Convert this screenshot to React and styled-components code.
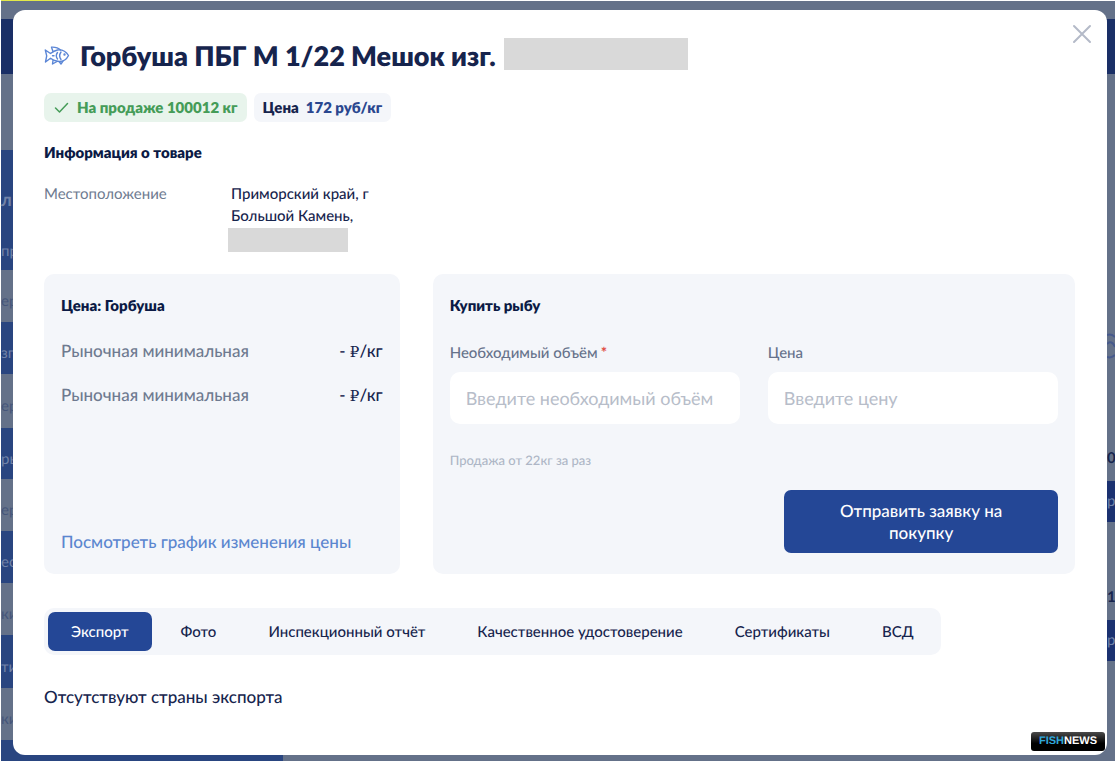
import React, { useState } from 'react';
import styled, { createGlobalStyle } from 'styled-components';

//* * Data * *//

const catalogRows = [
  { text: 'л', tone: 'blue', height: 120, big: true },
  { text: 'ера', tone: 'grey', height: 52 },
  { text: 'зго', tone: 'blue', height: 52 },
  { text: 'ера', tone: 'grey', height: 54 },
  { text: 'рыб', tone: 'blue', height: 51 },
  { text: 'ера', tone: 'grey', height: 52 },
  { text: 'ес', tone: 'blue', height: 52 },
  { text: 'ки', tone: 'grey', height: 52 },
  { text: 'тик', tone: 'blue', height: 53 },
  { text: 'ки', tone: 'grey', height: 52 },
];

const prices = ['Рыночная минимальная', 'Рыночная минимальная'];

const fields = [
  { id: 'volume', label: 'Необходимый объём', hint: 'Введите необходимый объём', required: true },
  { id: 'price', label: 'Цена', hint: 'Введите цену', required: false },
];

const tabs = ['Экспорт', 'Фото', 'Инспекционный отчёт', 'Качественное удостоверение', 'Сертификаты', 'ВСД'];

//* * Page behind the dialog * *//

const GlobalStyle = createGlobalStyle`
  * {
    box-sizing: border-box;
  }

  body {
    margin: 0;
    color: #16244d;
    font-family: Lato, 'Liberation Sans', sans-serif;
    font-size: 15px;
    text-rendering: geometricPrecision;
  }

  button, input {
    font-family: inherit;
    text-rendering: inherit;
  }
`;

const Page = styled.div`
  display: grid;
  min-height: 100vh;
  overflow: hidden;
  background: #fff;
`;

const Backdrop = styled.div`
  grid-area: 1 / 1;
  display: flex;
  flex-direction: column;
  margin-left: 1px;
  background: #647189;
`;

const TopLine = styled.div`
  height: 1px;
  background: linear-gradient(to right, #e3e84a 69px, #fff 69px);
`;

const HeaderBar = styled.div`
  height: 55px;
  margin-top: 18px;
  background: #1a2f66;
`;

const Columns = styled.div`
  display: flex;
  flex: 1;
  justify-content: space-between;
`;

const Catalog = styled.div`
  display: flex;
  flex-direction: column;
  width: 282px;
  padding-top: 76px;
`;

const CatalogRow = styled.div`
  display: flex;
  flex-direction: column;
  justify-content: ${(props) => (props.$big ? 'flex-end' : 'center')};
  gap: 32px;
  height: ${(props) => props.$height}px;
  padding: ${(props) => (props.$big ? '0 0 10px' : '10px 0 0')};
  background: ${(props) => (props.$tone === 'blue' ? '#294580' : '#647189')};
  color: ${(props) => (props.$tone === 'blue' ? '#7283a8' : '#46567a')};
`;

const CatalogTitle = styled.strong`
  font-size: 18px;
`;

const CatalogEnd = styled.div`
  flex: 1;
  background: #294580;
`;

const Offers = styled.div`
  display: flex;
  flex-direction: column;
  width: 8px;
  padding-top: 258px;
`;

const OfferList = styled.div`
  padding-top: 23px;
`;

const Offer = styled.div`
  display: flex;
  flex-direction: column;
  justify-content: flex-end;
  height: 139px;
  overflow: hidden;
  color: #16244d;
  font-weight: 700;
  line-height: 20px;
`;

const OfferTag = styled.span`
  height: 41px;
  margin-top: 13px;
  background: #1b3170;
  color: #7283a8;
  font-weight: 400;
  line-height: 41px;
`;

const RoundIcon = styled.svg`
  flex: none;
  width: 28px;
  height: 28px;
`;

//* * Dialog * *//

const Dialog = styled.main`
  grid-area: 1 / 1;
  position: relative;
  margin: 10px 8px 6px 13px;
  padding: 28px 32px 32px 31px;
  border-radius: 12px;
  background: #fff;
`;

const CloseButton = styled.button`
  position: absolute;
  top: 12px;
  right: 13px;
  width: 24px;
  height: 24px;
  padding: 0;
  border: 0;
  background: none;
  color: #b4bac8;
  cursor: pointer;
`;

const TitleRow = styled.header`
  display: flex;
  align-items: center;
  height: 36px;
`;

const FishIcon = styled.svg`
  width: 26px;
  height: 22px;
  margin-right: 10px;
`;

const Title = styled.h1`
  margin: 0;
  font-size: 27px;
  font-weight: 800;
  line-height: 36px;
`;

const Redacted = styled.span`
  width: ${(props) => props.$width}px;
  height: ${(props) => props.$height}px;
  background: #d9d9d9;
`;

const TitleRedacted = styled(Redacted)`
  margin: 0 0 4px 8px;
`;

const Tags = styled.div`
  display: flex;
  gap: 7px;
  margin-top: 19px;
`;

const Tag = styled.span`
  display: flex;
  align-items: center;
  gap: 7px;
  padding: 4px 9px 3px;
  border-radius: 7px;
  background: ${(props) => (props.$green ? '#e8f4ec' : '#f4f6fa')};
  color: ${(props) => (props.$green ? '#459c58' : '#16244d')};
  font-weight: 800;
  line-height: 22px;
`;

const TagValue = styled.span`
  color: #2a478f;
`;

const SectionTitle = styled.h2`
  margin: 0;
  color: #0b1a45;
  font-size: 15px;
  font-weight: 800;
  line-height: 22px;
`;

const InfoTitle = styled(SectionTitle)`
  margin-top: 20px;
`;

const Info = styled.dl`
  display: flex;
  margin: 19px 0 22px;
  line-height: 22px;
`;

const InfoLabel = styled.dt`
  width: 187px;
  color: #6e7a90;
`;

const InfoValue = styled.dd`
  display: flex;
  flex-direction: column;
  width: 150px;
  margin: 0;
  font-weight: 500;
`;

const InfoRedacted = styled(Redacted)`
  margin: 1px 0 0 -3px;
`;

const Cards = styled.div`
  display: grid;
  grid-template-columns: 356fr 643fr;
  gap: 33px;
`;

const Card = styled.section`
  display: flex;
  flex-direction: column;
  min-height: 300px;
  padding: 21px 17px;
  border-radius: 10px;
  background: #f4f6fa;
`;

const PriceRow = styled.div`
  display: flex;
  justify-content: space-between;
  height: 22px;
  margin-top: 22px;
  font-size: 17px;
  font-weight: 500;
  line-height: 22px;
`;

const PriceList = styled.div`
  padding-top: 1px;
`;

const PriceLabel = styled.span`
  color: #6e7a90;
`;

const Ruble = styled.span`
  font-family: 'DejaVu Serif', serif;
  font-size: 15px;
`;

const ChartLink = styled.a`
  margin-top: auto;
  color: #5b86cf;
  font-size: 17px;
  font-weight: 500;
  line-height: 22px;
  text-decoration: none;
`;

const Fields = styled.div`
  display: grid;
  grid-template-columns: 1fr 1fr;
  gap: 28px;
  margin-top: 25px;
`;

const Field = styled.div`
  display: flex;
  flex-direction: column;
  gap: 8px;
`;

const Label = styled.label`
  color: #66728b;
  font-weight: 500;
  line-height: 22px;
`;

const Star = styled.span`
  margin-left: 3px;
  color: #e0483e;
  font-weight: 700;
`;

const Input = styled.input`
  width: 100%;
  height: 52px;
  padding: 0 16px;
  border: 0;
  border-radius: 10px;
  background: #fff;
  color: #16244d;
  font-size: 18px;

  &::placeholder {
    color: #b7bdc9;
    opacity: 1;
  }
`;

const Note = styled.p`
  margin: 25px 0 0;
  color: #aeb6c6;
  font-size: 13px;
  font-weight: 500;
  line-height: 22px;
`;

const SubmitButton = styled.button`
  align-self: flex-end;
  width: 45%;
  min-height: 63px;
  margin-top: auto;
  padding: 8px 32px;
  border: 0;
  border-radius: 7px;
  background: #244796;
  color: #fff;
  font-size: 17px;
  font-weight: 500;
  line-height: 22px;
  cursor: pointer;
`;

const Tabs = styled.nav`
  display: flex;
  width: fit-content;
  margin-top: 34px;
  padding: 4px;
  border-radius: 10px;
  background: #f4f6fa;
`;

const Tab = styled.button`
  height: 39px;
  margin-right: 6px;
  padding: 0 23px;
  border: 0;
  border-radius: 7px;
  background: ${(props) => (props.$active ? '#244796' : 'transparent')};
  color: ${(props) => (props.$active ? '#fff' : '#16244d')};
  font-size: 15px;
  font-weight: 500;
  cursor: pointer;

  &:last-child {
    margin-right: 0;
  }
`;

const Empty = styled.p`
  margin: 31px 0 0;
  font-size: 17px;
  font-weight: 500;
  line-height: 22px;
`;

const Badge = styled.div`
  position: absolute;
  right: 2px;
  bottom: 4px;
  width: 74px;
  border-radius: 3px;
  background: linear-gradient(#4a4a4a, #000 60%);
  color: #fff;
  font: 700 11px/19px 'Liberation Sans', sans-serif;
  text-align: center;
`;

const BadgeAccent = styled.span`
  color: #2fa8dc;
`;

//* * Func/Render * *//

const Background = () => (
  <Backdrop aria-hidden="true">
    <TopLine />
    <HeaderBar />
    <Columns>
      <Catalog>
        {catalogRows.map((row, idx) => (
          <CatalogRow key={idx} $tone={row.tone} $height={row.height} $big={row.big}>
            {row.big ? <CatalogTitle>{row.text}</CatalogTitle> : row.text}
            {row.big && <span>про</span>}
          </CatalogRow>
        ))}
        <CatalogEnd />
      </Catalog>
      <Offers>
        <RoundIcon viewBox="0 0 28 28" fill="none" stroke="#46598c" strokeWidth="2">
          <path d="M0 3c3-1 6 0 8 2M0 12c3-3 6-2 8 3M0 25c3 1 6 0 8-2" />
        </RoundIcon>
        <OfferList>
          <Offer>
            0
            <OfferTag>р</OfferTag>
          </Offer>
          <Offer>
            1
            <OfferTag>р</OfferTag>
          </Offer>
        </OfferList>
      </Offers>
    </Columns>
  </Backdrop>
);

const App = () => {
  const [active, setActive] = useState(0);

  return (
    <Page>
      <GlobalStyle />
      <Background />
      <Dialog>
        <CloseButton aria-label="Закрыть">
          <svg width="24" height="24" viewBox="0 0 24 24" stroke="currentColor" strokeWidth="2" strokeLinecap="round">
            <path d="M4 4l16 16M20 4L4 20" />
          </svg>
        </CloseButton>
        <TitleRow>
          <FishIcon viewBox="0 0 26 22" fill="none" stroke="#5b86d6" strokeWidth="1.4" strokeLinejoin="round" strokeLinecap="round">
            <path d="M6.500 8.500C9 6.500 11 5.500 13.500 5c5-.6 8.500 1.500 11 5.500-2 4-6 6.500-11 5.800-2.500-.4-5-1.300-7-3L1.500 17l1.200-6.200L1.300 5z" />
            <path d="M9 6.500L7.500 2.200c4-.2 7 .8 9 2.800M9 15.500L8.500 19l4.500-2.500M15.500 17l1.500 2 2-2.800" />
            <path d="M17 7c-1.800 2.500-1.800 5 0 7.500M13.500 7.500c-1.500 2-1.500 4.500 0 6.500" />
            <path d="M8.500 10.700h1.500" />
            <circle cx="20.500" cy="9.500" r=".5" fill="#5b86d6" />
          </FishIcon>
          <Title>Горбуша ПБГ М 1/22 Мешок изг.</Title>
          <TitleRedacted $width={184} $height={32} />
        </TitleRow>
        <Tags>
          <Tag $green>
            <svg width="17" height="14" viewBox="0 0 17 14" fill="none" stroke="currentColor" strokeWidth="1.500" strokeLinecap="round" strokeLinejoin="round">
              <path d="M2.500 7l4 4L14.500 2.500" />
            </svg>
            На продаже 100012 кг
          </Tag>
          <Tag>
            Цена
            <TagValue>172 руб/кг</TagValue>
          </Tag>
        </Tags>
        <InfoTitle>Информация о товаре</InfoTitle>
        <Info>
          <InfoLabel>Местоположение</InfoLabel>
          <InfoValue>
            Приморский край, г Большой Камень,
            <InfoRedacted $width={120} $height={24} />
          </InfoValue>
        </Info>
        <Cards>
          <Card>
            <SectionTitle>Цена: Горбуша</SectionTitle>
            <PriceList>
              {prices.map((price, idx) => (
                <PriceRow key={idx}>
                  <PriceLabel>{price}</PriceLabel>
                  <span>- <Ruble>₽</Ruble>/кг</span>
                </PriceRow>
              ))}
            </PriceList>
            <ChartLink href="#chart">Посмотреть график изменения цены</ChartLink>
          </Card>
          <Card>
            <SectionTitle>Купить рыбу</SectionTitle>
            <Fields>
              {fields.map((field) => (
                <Field key={field.id}>
                  <Label htmlFor={field.id}>
                    {field.label}
                    {field.required && <Star>*</Star>}
                  </Label>
                  <Input id={field.id} placeholder={field.hint} />
                </Field>
              ))}
            </Fields>
            <Note>Продажа от 22кг за раз</Note>
            <SubmitButton>Отправить заявку на покупку</SubmitButton>
          </Card>
        </Cards>
        <Tabs>
          {tabs.map((tab, idx) => (
            <Tab key={tab} $active={idx === active} onClick={() => setActive(idx)}>{tab}</Tab>
          ))}
        </Tabs>
        <Empty>Отсутствуют страны экспорта</Empty>
        <Badge><BadgeAccent>FISH</BadgeAccent>NEWS</Badge>
      </Dialog>
    </Page>
  );
};

export default App;
